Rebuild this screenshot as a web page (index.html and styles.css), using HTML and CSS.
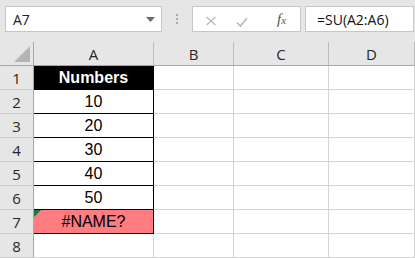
FILE: index.html
```html
<!DOCTYPE html>
<html>
<head>
<title>Sheet</title>
<link rel="stylesheet" href="styles.css">
</head>
<body>
    <div class="toolbar">
        <div class="namebox">
            <span>A7</span>
            <svg class="caret" width="9" height="5" viewBox="0 0 9 5"><path d="M0 0h9L4.5 5z" fill="#6b6b6b"/></svg>
        </div>
        <div class="dots"><i></i><i></i><i></i></div>
        <div class="fxbox">
            <svg class="ico-x" width="12" height="10" viewBox="0 0 12 10"><path d="M1.5 1l9 8M10.5 1l-9 8" stroke="#b8b8b8" stroke-width="1.3" fill="none"/></svg>
            <svg class="ico-ok" width="12" height="10" viewBox="0 0 12 10"><path d="M1 5.5l3.5 3.5 6.5-8" stroke="#b8b8b8" stroke-width="1.6" fill="none"/></svg>
            <span class="fx">f<sub>x</sub></span>
        </div>
        <div class="formula">=SU(A2:A6)</div>
    </div>
    <div class="sheet">
        <div class="corner"><i></i></div>
        <div class="colhead">A</div>
        <div class="colhead">B</div>
        <div class="colhead">C</div>
        <div class="colhead">D</div>

        <div class="rowhead">1</div>
        <div class="cell data title">Numbers</div>
        <div class="cell"></div><div class="cell"></div><div class="cell"></div>

        <div class="rowhead">2</div>
        <div class="cell data">10</div>
        <div class="cell"></div><div class="cell"></div><div class="cell"></div>

        <div class="rowhead">3</div>
        <div class="cell data">20</div>
        <div class="cell"></div><div class="cell"></div><div class="cell"></div>

        <div class="rowhead">4</div>
        <div class="cell data">30</div>
        <div class="cell"></div><div class="cell"></div><div class="cell"></div>

        <div class="rowhead">5</div>
        <div class="cell data">40</div>
        <div class="cell"></div><div class="cell"></div><div class="cell"></div>

        <div class="rowhead">6</div>
        <div class="cell data">50</div>
        <div class="cell"></div><div class="cell"></div><div class="cell"></div>

        <div class="rowhead">7</div>
        <div class="cell data error">#NAME?</div>
        <div class="cell"></div><div class="cell"></div><div class="cell"></div>

        <div class="rowhead">8</div>
        <div class="cell"></div>
        <div class="cell"></div><div class="cell"></div><div class="cell"></div>
    </div>
</body>
</html>
```

FILE: styles.css
```css
html {
    background: #e6e6e6;
}
body {
    margin: 0;
    width: 415px;
    height: 258px;
    overflow: hidden;
    font-family: "Open Sans", "Noto Sans", sans-serif;
    color: #222;
}

/* formula bar */
.toolbar {
    display: flex;
    align-items: flex-start;
    height: 42px;
    padding: 6px 0 0 5px;
    box-sizing: border-box;
}
.namebox,
.fxbox,
.formula {
    height: 26px;
    box-sizing: border-box;
    background: #fff;
    border: 1px solid #c6c6c6;
    display: flex;
    align-items: center;
    font-size: 14px;
}
.namebox {
    width: 157px;
    padding: 0 6px 0 7px;
    justify-content: space-between;
}
.caret {
    margin-top: 1px;
}
.dots {
    width: 30px;
    height: 26px;
    display: flex;
    flex-direction: column;
    align-items: center;
    justify-content: center;
    gap: 2px;
}
.dots i {
    width: 2px;
    height: 2px;
    background: #a8a8a8;
}
.fxbox {
    width: 109px;
    padding-left: 12px;
}
.ico-x {
    margin-top: 3px;
}
.ico-ok {
    margin: 5px 0 0 19px;
}
.fx {
    margin-left: 29px;
    font-family: "Liberation Serif", serif;
    font-style: italic;
    font-size: 15px;
    color: #555;
}
.fx sub {
    font-size: 11px;
    vertical-align: 0;
}
.formula {
    width: 109px;
    margin-left: 4px;
    padding-left: 11px;
    color: #111;
}

/* grid */
.sheet {
    display: grid;
    grid-template-columns: 34px 120px 80px 95px 86px;
    grid-template-rows: repeat(9, 24px);
    background: #fff;
}
.corner,
.colhead,
.rowhead {
    background: #e6e6e6;
    box-sizing: border-box;
    display: flex;
    align-items: center;
    justify-content: center;
    font-size: 15px;
    color: #262626;
}
.corner {
    border-right: 1px solid #a6a6a6;
    border-bottom: 1px solid #a6a6a6;
    align-items: flex-end;
    justify-content: flex-end;
    padding: 0 3px 3px 0;
}
.corner i {
    width: 16px;
    height: 16px;
    background: #b4b4b4;
    clip-path: polygon(100% 0, 100% 100%, 0 100%);
}
.colhead {
    border-right: 1px solid #bdbdbd;
    border-bottom: 1px solid #a6a6a6;
    padding-top: 1px;
}
.rowhead {
    border-right: 1px solid #a6a6a6;
    border-bottom: 1px solid #cfcfcf;
    padding-top: 1px;
}
.cell {
    border-right: 1px solid #d4d4d4;
    border-bottom: 1px solid #d4d4d4;
    box-sizing: border-box;
    position: relative;
}
.data {
    display: flex;
    align-items: center;
    justify-content: center;
    font-family: "Liberation Sans", Arial, sans-serif;
    font-size: 16px;
    color: #000;
    border-color: #000;
    padding-top: 1px;
}
.title {
    background: #000;
    color: #fff;
    font-weight: bold;
}
.error {
    background: #ff7c80;
}
.error::before {
    content: "";
    position: absolute;
    left: 0;
    top: 0;
    width: 7px;
    height: 7px;
    background: #107c41;
    clip-path: polygon(0 0, 100% 0, 0 100%);
}
```
